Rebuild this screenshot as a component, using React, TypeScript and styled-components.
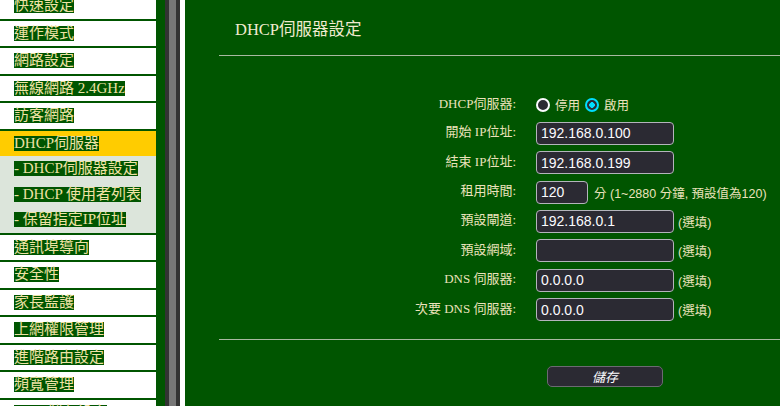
import styled, { createGlobalStyle } from "styled-components";

const GlobalStyle = createGlobalStyle`
  html, body {
    margin: 0;
    padding: 0;
    height: 100%;
    overflow: hidden;
    background: #005500;
  }
  #root {
    height: 100%;
  }
`;

const Page = styled.div`
  display: flex;
  height: 100vh;
  overflow: hidden;
  font-family: "Liberation Serif", "Noto Sans CJK TC", serif;
`;

const Sidebar = styled.nav`
  width: 165px;
  flex-shrink: 0;
  padding-right: 9px;
  box-sizing: border-box;
  margin-top: -7px;
  background: #005500;
  display: flex;
  flex-direction: column;
  gap: 2px;
`;

const MenuGroup = styled.div`
  display: flex;
  flex-direction: column;
`;

const MenuRow = styled.div<{ $kind?: "active" | "sub" }>`
  height: 25.5px;
  flex-shrink: 0;
  padding-left: 14px;
  display: flex;
  align-items: center;
  background: ${(p) =>
    p.$kind === "active" ? "#ffcc00" : p.$kind === "sub" ? "#dce5db" : "#ffffff"};
`;

const MenuLabel = styled.span`
  display: inline-block;
  height: 15px;
  line-height: 15px;
  font-size: 15px;
  white-space: nowrap;
  color: #efe2a4;
  background: #005500;
`;

const Splitter = styled.div`
  width: 20px;
  flex-shrink: 0;
  display: flex;
`;

const Bar = styled.div<{ $w: number; $c: string }>`
  width: ${(p) => p.$w}px;
  background: ${(p) => p.$c};
`;

const Main = styled.main`
  flex: 1;
  padding-left: 34px;
  background: #005500;
  color: #ebe2bb;
`;

const Title = styled.div`
  height: 55px;
  padding-left: 16px;
  display: flex;
  align-items: center;
  font-size: 16.5px;
  color: #f1ebcf;
`;

const Rule = styled.div`
  height: 1px;
  background: #a8b9a0;
`;

const Form = styled.div`
  margin-top: 38px;
  display: grid;
  grid-template-columns: 297px auto;
  column-gap: 20px;
  row-gap: 6.4px;
  align-items: center;
`;

const Label = styled.div`
  text-align: right;
  font-size: 13px;
  line-height: 16px;
  margin-top: -2px;
  white-space: nowrap;
`;

const Control = styled.div`
  display: flex;
  align-items: center;
  min-height: 21.4px;
  font-family: "Liberation Sans", "Noto Sans CJK TC", sans-serif;
  font-size: 12.5px;
`;

const Field = styled.input<{ $w?: number }>`
  box-sizing: border-box;
  width: ${(p) => p.$w ?? 138}px;
  height: 23px;
  padding: 0 4px;
  border: 1px solid #b4b4bc;
  border-radius: 4px;
  background: #2b2a33;
  color: #fbfbfe;
  font-family: "Liberation Sans", sans-serif;
  font-size: 14px;
  outline: none;
`;

const Hint = styled.span<{ $gap: number }>`
  margin-left: ${(p) => p.$gap}px;
  white-space: nowrap;
`;

const RadioLabel = styled.label`
  display: flex;
  align-items: center;
  gap: 5px;
  margin-right: 5px;
`;

const Radio = styled.input`
  appearance: none;
  margin: 0;
  width: 14px;
  height: 14px;
  border-radius: 50%;
  box-sizing: border-box;
  border: 2px solid #fbfbfe;
  background: #2b2a33;
  &:checked {
    border-color: #00ddff;
    background: radial-gradient(circle, #00ddff 0 2.6px, #2b2a33 3px);
  }
`;

const ButtonRow = styled.div`
  padding-top: 26px;
  padding-left: 328px;
`;

const SaveButton = styled.button`
  width: 116px;
  height: 21px;
  border: 1px solid #6b6a72;
  border-radius: 5px;
  background: #2b2a33;
  color: #fbfbfe;
  font-family: "Liberation Sans", "Noto Sans CJK TC", sans-serif;
  font-size: 13px;
  font-style: italic;
  padding: 0;
`;

const topMenu = ["快速設定", "運作模式", "網路設定", "無線網路 2.4GHz", "訪客網路"];
const subMenu = ["- DHCP伺服器設定", "- DHCP 使用者列表", "- 保留指定IP位址"];
const bottomMenu = ["通訊埠導向", "安全性", "家長監護", "上網權限管理", "進階路由設定", "頻寬管理", "USB 儲存設定"];

const fields = [
  { label: "開始 IP位址:", value: "192.168.0.100" },
  { label: "結束 IP位址:", value: "192.168.0.199" },
  { label: "租用時間:", value: "120", width: 52, hint: "分 (1~2880 分鐘, 預設值為120)", gap: 6 },
  { label: "預設閘道:", value: "192.168.0.1", hint: "(選填)", gap: 4 },
  { label: "預設網域:", value: "", hint: "(選填)", gap: 4 },
  { label: "DNS 伺服器:", value: "0.0.0.0", hint: "(選填)", gap: 4 },
  { label: "次要 DNS 伺服器:", value: "0.0.0.0", hint: "(選填)", gap: 4 },
];

export default function App() {
  return (
    <Page>
      <GlobalStyle />
      <Sidebar>
        {topMenu.map((item) => (
          <MenuRow key={item}>
            <MenuLabel>{item}</MenuLabel>
          </MenuRow>
        ))}
        <MenuGroup>
          <MenuRow $kind="active">
            <MenuLabel>DHCP伺服器</MenuLabel>
          </MenuRow>
          {subMenu.map((item) => (
            <MenuRow $kind="sub" key={item}>
              <MenuLabel>{item}</MenuLabel>
            </MenuRow>
          ))}
        </MenuGroup>
        {bottomMenu.map((item) => (
          <MenuRow key={item}>
            <MenuLabel>{item}</MenuLabel>
          </MenuRow>
        ))}
      </Sidebar>

      <Splitter>
        <Bar $w={4} $c="#333333" />
        <Bar $w={7} $c="#777777" />
        <Bar $w={4} $c="#333333" />
        <Bar $w={5} $c="#ffffff" />
      </Splitter>

      <Main>
        <Title>DHCP伺服器設定</Title>
        <Rule />
        <Form>
          <Label>DHCP伺服器:</Label>
          <Control>
            <RadioLabel>
              <Radio type="radio" name="dhcp" />
              停用
            </RadioLabel>
            <RadioLabel>
              <Radio type="radio" name="dhcp" defaultChecked />
              啟用
            </RadioLabel>
          </Control>
          {fields.map((f) => (
            <FieldRow key={f.label} {...f} />
          ))}
        </Form>
        <Rule style={{ marginTop: 18 }} />
        <ButtonRow>
          <SaveButton type="button">儲存</SaveButton>
        </ButtonRow>
      </Main>
    </Page>
  );
}

function FieldRow(props: { label: string; value: string; width?: number; hint?: string; gap?: number }) {
  return (
    <>
      <Label>{props.label}</Label>
      <Control>
        <Field defaultValue={props.value} $w={props.width} />
        {props.hint && <Hint $gap={props.gap ?? 4}>{props.hint}</Hint>}
      </Control>
    </>
  );
}
